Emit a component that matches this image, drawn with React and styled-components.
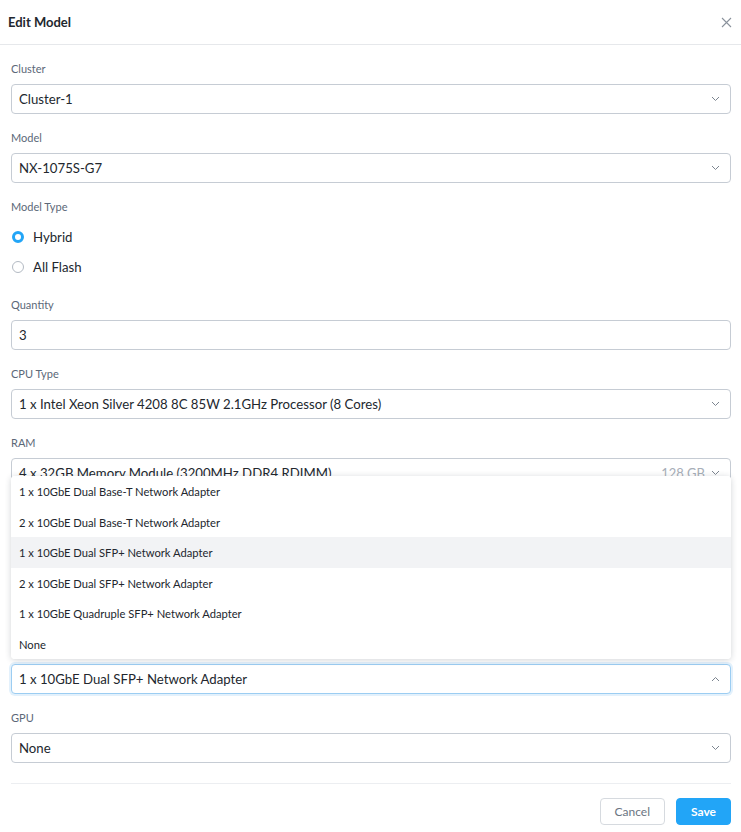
import React from "react";
import styled, { createGlobalStyle } from "styled-components";

const Global = createGlobalStyle`
  html, body { margin: 0; padding: 0; background: #fff; }
  body { font-family: "Lato", "Liberation Sans", sans-serif; color: #22272e; }
  * { box-sizing: border-box; }
`;

const Modal = styled.div`
  width: 741px;
  height: 832px;
  background: #fff;
  display: flex;
  flex-direction: column;
`;

const Header = styled.div`
  height: 45px;
  border-bottom: 1px solid #e6e8eb;
  display: flex;
  align-items: center;
  justify-content: space-between;
  padding: 0 8px 0 8px;
`;

const Title = styled.div`
  font-size: 13px;
  font-weight: 700;
  color: #22272e;
`;

const Close = styled.button`
  border: 0;
  background: none;
  padding: 0;
  width: 14px;
  height: 14px;
  display: flex;
  align-items: center;
  justify-content: center;
  cursor: pointer;
`;

const Body = styled.div`
  padding: 17px 10px 0 11px;
  display: flex;
  flex-direction: column;
`;

const Field = styled.div`
  position: relative;
  display: flex;
  flex-direction: column;
  margin-bottom: 16.8px;
`;

const Label = styled.div`
  font-size: 11px;
  line-height: 14px;
  color: #5b6878;
  margin-bottom: 8px;
  visibility: ${(p) => (p.$covered ? "hidden" : "visible")};
`;

const Box = styled.div`
  height: 30px;
  border: 1px solid ${(p) => (p.$focused ? "#9ccdf2" : "#c6ccd4")};
  box-shadow: ${(p) => (p.$focused ? "0 0 0 2px #e3f1fc" : "none")};
  border-radius: 4px;
  display: flex;
  align-items: center;
  padding: 0 10px 0 7px;
  font-size: 13.2px;
  color: #22272e;
  background: #fff;
  visibility: ${(p) => (p.$covered ? "hidden" : "visible")};
`;

const Value = styled.span`
  flex: 1;
  white-space: nowrap;
`;

const Hint = styled.span`
  color: #a7aeb8;
  font-size: 13px;
  margin-right: 6px;
`;

const Chevron = ({ up }) => (
  <svg width="9" height="6" viewBox="0 0 9 6" fill="none">
    <path
      d={up ? "M1 5 L4.5 1.5 L8 5" : "M1 1 L4.5 4.5 L8 1"}
      stroke="#7c8590"
      strokeWidth="1"
    />
  </svg>
);

const RadioRow = styled.label`
  height: 30px;
  display: flex;
  align-items: center;
  gap: 9px;
  font-size: 13.2px;
  color: #22272e;
  padding-left: 1px;
`;

const RadioDot = styled.span`
  width: 12px;
  height: 12px;
  border-radius: 50%;
  background: #fff;
  border: ${(p) => (p.$checked ? "3.5px solid #22a5f7" : "1px solid #b3bac3")};
`;

const Menu = styled.div`
  position: absolute;
  left: 0;
  right: 0;
  bottom: calc(100% - 17px);
  background: #fff;
  border-radius: 4px;
  box-shadow: 0 1px 6px rgba(30, 40, 55, 0.2);
  z-index: 5;
  overflow: hidden;
`;

const Item = styled.div`
  height: 30.5px;
  display: flex;
  align-items: center;
  padding-left: 8px;
  font-size: 11.2px;
  color: #22272e;
  background: ${(p) => (p.$active ? "#f2f3f5" : "#fff")};
`;

const Footer = styled.div`
  margin: 3px 10px 0 11px;
  border-top: 1px solid #eceef1;
  padding-top: 14px;
  display: flex;
  justify-content: flex-end;
  gap: 11px;
`;

const Button = styled.button`
  height: 27px;
  padding: 0 ${(p) => (p.$primary ? "13px" : "14px")};
  border-radius: 4px;
  font-family: inherit;
  font-size: 12px;
  font-weight: ${(p) => (p.$primary ? 700 : 400)};
  color: ${(p) => (p.$primary ? "#fff" : "#6b7582")};
  background: ${(p) => (p.$primary ? "#22a5f7" : "#fff")};
  border: 1px solid ${(p) => (p.$primary ? "#22a5f7" : "#d6dadf")};
  min-width: ${(p) => (p.$primary ? "55px" : "64px")};
`;

const options = [
  "1 x 10GbE Dual Base-T Network Adapter",
  "2 x 10GbE Dual Base-T Network Adapter",
  "1 x 10GbE Dual SFP+ Network Adapter",
  "2 x 10GbE Dual SFP+ Network Adapter",
  "1 x 10GbE Quadruple SFP+ Network Adapter",
  "None",
];

const SelectField = ({ label, value, hint, focused, up, covered, labelCovered, children }) => (
  <Field>
    <Label $covered={covered || labelCovered}>{label}</Label>
    <Box $focused={focused} $covered={covered}>
      <Value>{value}</Value>
      {hint && <Hint>{hint}</Hint>}
      <Chevron up={up} />
    </Box>
    {children}
  </Field>
);

export default function App() {
  return (
    <Modal>
      <Global />
      <Header>
        <Title>Edit Model</Title>
        <Close aria-label="Close">
          <svg width="11" height="11" viewBox="0 0 11 11">
            <path d="M1 1 L10 10 M10 1 L1 10" stroke="#8a929c" strokeWidth="1.1" />
          </svg>
        </Close>
      </Header>
      <Body>
        <SelectField label="Cluster" value="Cluster-1" />
        <SelectField label="Model" value="NX-1075S-G7" />
        <Field>
          <Label>Model Type</Label>
          <RadioRow>
            <RadioDot $checked />
            Hybrid
          </RadioRow>
          <RadioRow>
            <RadioDot />
            All Flash
          </RadioRow>
        </Field>
        <Field>
          <Label>Quantity</Label>
          <Box>
            <Value>3</Value>
          </Box>
        </Field>
        <SelectField
          label="CPU Type"
          value="1 x Intel Xeon Silver 4208 8C 85W 2.1GHz Processor (8 Cores)"
        />
        <SelectField
          label="RAM"
          value="4 x 32GB Memory Module (3200MHz DDR4 RDIMM)"
          hint="128 GB"
        />
        <SelectField label="SSD" value="2 x 1.92TB SSD" covered />
        <SelectField label="HDD" value="4 x 8TB HDD" covered />
        <SelectField
          label="Network"
          value="1 x 10GbE Dual SFP+ Network Adapter"
          focused
          up
          labelCovered
        >
          <Menu>
            {options.map((o, i) => (
              <Item key={o} $active={i === 2}>
                {o}
              </Item>
            ))}
          </Menu>
        </SelectField>
        <SelectField label="GPU" value="None" />
      </Body>
      <Footer>
        <Button>Cancel</Button>
        <Button $primary>Save</Button>
      </Footer>
    </Modal>
  );
}
